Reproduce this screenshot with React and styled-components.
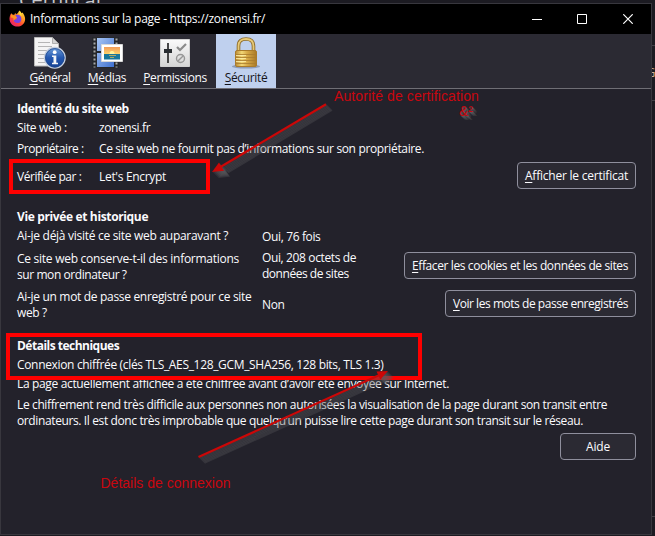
import React from 'react';
import styled, { createGlobalStyle } from 'styled-components';

const GlobalStyle = createGlobalStyle`
  * { box-sizing: border-box; }
  html, body { margin: 0; height: 536px; overflow: hidden; background: #1c1b22; }
`;

const Desktop = styled.div`
  position: relative;
  display: flex;
  flex-direction: column;
  width: 655px;
  height: 536px;
  overflow: hidden;
  background: #1c1b22;
  color: #fbfbfe;
  font: 12px/16px 'Open Sans', 'Noto Sans', sans-serif;
`;

const PageBehind = styled.div`
  height: 3px;
  flex: none;
  display: flex;
  align-items: flex-end;
  padding-left: 19px;
  overflow: hidden;
  font-size: 20px;
  line-height: 6px;
  color: #c8c8cc;
`;

const Dialog = styled.section`
  width: 652px;
  height: 532px;
  flex: none;
  display: flex;
  flex-direction: column;
  border: 1px solid #38373e;
  background: #23222b;
`;

const TitleBar = styled.header`
  height: 30px;
  flex: none;
  display: flex;
  align-items: center;
  padding: 0 0 1px 8px;
  background: #000;
`;

const Text = styled.span`
  display: block;
  white-space: pre;
  letter-spacing: ${(p) => p.$track ?? -0.36}px;
  font-weight: ${(p) => (p.$bold ? 700 : 400)};
`;

const WindowTitle = styled(Text)`
  margin-left: 4px;
  flex: 1;
`;

const WindowButtons = styled.div`
  display: flex;
  gap: 35px;
  margin-right: 18px;
  svg { display: block; }
  svg:last-child { margin-left: 1px; }
`;

const Toolbar = styled.nav`
  height: 55px;
  flex: none;
  display: flex;
  padding-left: 19px;
  background: #2b2a33;
  border-bottom: 1px solid #6f6e75;
`;

const Tab = styled.div`
  width: ${(p) => p.$width}px;
  display: flex;
  flex-direction: column;
  align-items: center;
  gap: 1px;
  padding-top: 3px;
  color: ${(p) => (p.$active ? '#15141a' : '#fbfbfe')};
  background: ${(p) => (p.$active ? '#bfd0ee' : 'transparent')};
  svg { display: block; flex: none; }
`;

const Key = styled.span`
  text-decoration: underline;
  text-underline-offset: 2px;
  text-decoration-thickness: 1px;
`;

const Content = styled.main`
  flex: 1;
  padding: 12px 15px 0 16px;
`;

const Group = styled.section`
  height: ${(p) => p.$height}px;
`;

const Heading = styled(Text).attrs({ as: 'h2', $bold: true })`
  margin: 0;
  font-size: 12px;
  height: 19px;
`;

const Row = styled.div`
  display: grid;
  grid-template-columns: ${(p) => p.$columns};
  height: ${(p) => p.$height}px;
`;

const Cell = styled.div`
  padding-top: ${(p) => p.$top ?? 0}px;
`;

const Button = styled.button`
  width: ${(p) => p.$width}px;
  height: 27px;
  margin: ${(p) => p.$top ?? -1}px 0 0 auto;
  padding: 0;
  display: flex;
  justify-content: center;
  align-items: center;
  border: 1px solid #8f8f9d;
  border-radius: 4px;
  background: #2b2a33;
  color: #fbfbfe;
  font: inherit;
`;

const Paragraph = styled.div`
  height: ${(p) => p.$height}px;
`;

const Frame = styled.div`
  position: absolute;
  left: ${(p) => p.$x}px;
  top: ${(p) => p.$y}px;
  width: ${(p) => p.$w}px;
  height: ${(p) => p.$h}px;
  border: 4px solid #fe0000;
`;

const Arrows = styled.svg`
  position: absolute;
  inset: 0;
  pointer-events: none;
`;

const Note = styled.span`
  position: absolute;
  left: ${(p) => p.$x}px;
  top: ${(p) => p.$y}px;
  white-space: pre;
  color: #c9070f;
  font: 14px/16px 'Liberation Sans', Arial, sans-serif;
  letter-spacing: ${(p) => p.$track ?? 0}px;
  text-shadow: ${(p) =>
    p.$shadow ? '1px 1px #55555a, 2px 2px #4b4b50, 3px 3px #404045, 4px 4px #35353b' : 'none'};
`;

const BehindText = styled.div`
  position: absolute;
  left: 652px;
  top: 64px;
  width: 3px;
  height: 16px;
  overflow: hidden;
  font-size: 13px;
  color: #c9ae94;
  text-indent: -6px;
`;

const BehindRule = styled.div`
  position: absolute;
  left: 652px;
  top: ${(p) => p.$y}px;
  width: 3px;
  height: 1px;
  background: #424148;
`;

function FirefoxLogo() {
  return (
    <svg width="17" height="17" viewBox="0 0 17 17">
      <defs>
        <linearGradient id="fox" x1="1" y1="0" x2="0.25" y2="1">
          <stop offset="0" stopColor="#fff04a" />
          <stop offset="0.4" stopColor="#ff9a22" />
          <stop offset="0.7" stopColor="#ff4236" />
          <stop offset="1" stopColor="#e62273" />
        </linearGradient>
      </defs>
      <path d="M2.2 3.2 3.8 4.8 5.4 4.7 6.2 2.7 7 4.6C8.5 3.5 9.4 2.5 10.3.5c1 .7 1.8 1.7 2.3 2.8l1-.8c.5 1 1.1 1.7 1.6 2.7 2.7 5.4-.8 11.4-6.6 11.4C3.6 16.6.4 13 .5 8.600c.1-2 .7-3.600 1.700-5.400Z" fill="url(#fox)" />
      <path d="M7 4.900c3-.8 5.400.9 5.400 4 0 2.500-1.600 4.200-3.900 4.200-2.500 0-4-1.600-3.900-3.800 1.200.5 2.400.4 3.500-.6L5.500 7.800Z" fill="#7542e5" />
      <path d="m2.100 4 2 1.600 2.700.4 1.400 1.700-1.900 1.100-1.700 1.900-.3-2.600-2.500-.6Z" fill="#ff941e" />
      <path d="M10.300.7c2.100 1.500 2.500 3.500 2.300 5.500L10.500 4Z" fill="#ffdf3c" />
    </svg>
  );
}

function GeneralIcon() {
  return (
    <svg width="32" height="32" viewBox="0 0 32 32">
      <defs>
        <linearGradient id="info" x1="0" y1="0" x2="0" y2="1">
          <stop offset="0" stopColor="#6f9fda" />
          <stop offset="0.5" stopColor="#2458b0" />
          <stop offset="1" stopColor="#143f91" />
        </linearGradient>
      </defs>
      <path d="M.5.500h18l6 6v22.500H.5Z" fill="#f4f4f4" stroke="#b9b9b9" />
      <path d="M18.500.500v6h6Z" fill="#d4d4d4" stroke="#999" strokeWidth=".7" />
      <path d="M4 5.500h12M4 9.500h14M4 13.500h9M4 17.500h7M4 21.500h7M4 25.500h9" stroke="#b5b5b5" />
      <circle cx="20.800" cy="20.800" r="10.300" fill="url(#info)" stroke="#c5cfde" strokeWidth="1.400" />
      <circle cx="20.800" cy="20.800" r="9.300" fill="none" stroke="#1c4790" strokeWidth=".8" />
      <circle cx="20.700" cy="15.200" r="1.900" fill="#fff" />
      <path d="M18 18.500h4.300v7.300h1.700v1.500h-6v-1.500h1.500V20H18Z" fill="#f3f5f8" />
    </svg>
  );
}

function MediaIcon() {
  return (
    <svg width="32" height="32" viewBox="0 0 32 32">
      <defs>
        <linearGradient id="film" x1="0" y1="0" x2="1" y2="1">
          <stop offset="0" stopColor="#a6c5f5" />
          <stop offset="1" stopColor="#3f70cf" />
        </linearGradient>
        <linearGradient id="sunset" x1="0" y1="0" x2="0" y2="1">
          <stop offset="0" stopColor="#f29b58" />
          <stop offset="1" stopColor="#ffdc70" />
        </linearGradient>
      </defs>
      <path d="M1 0h27v31H1Z" fill="#25272b" />
      <path d="M6 1h17v13H6ZM6 16h17v14H6Z" fill="url(#film)" />
      <path d="M3.500 1.500v29M25.500 1.500v29" stroke="#a8a8a8" strokeWidth="2" strokeDasharray="2 2" />
      <path d="M10.500 7.500h21v17h-21Z" fill="#fff" stroke="#d8d8d8" />
      <path d="M13 10h16v8H13Z" fill="url(#sunset)" />
      <circle cx="21" cy="16.500" r="2.500" fill="#fff29a" />
      <path d="M13 17h16v5.500H13Z" fill="#18779b" />
      <path d="M18 18.500h7M19 20.500h4" stroke="#d1b75c" strokeWidth=".8" />
    </svg>
  );
}

function PermissionsIcon() {
  return (
    <svg width="32" height="32" viewBox="0 0 32 32">
      <defs>
        <linearGradient id="panel" x1="0" y1="0" x2="0" y2="1">
          <stop offset="0" stopColor="#fafafa" />
          <stop offset="1" stopColor="#d5d5d5" />
        </linearGradient>
      </defs>
      <path d="M1.500 2.500h29v27h-29Z" fill="url(#panel)" stroke="#d0d0d0" />
      <path d="M9 6v20" stroke="#484848" strokeWidth="2" />
      <path d="M5 12h8v4H5Z" fill="#292d31" />
      <path d="m18 10 3 3 6-6" fill="none" stroke="#8b8b8b" strokeWidth="2.200" />
      <circle cx="21.500" cy="21.500" r="4" fill="none" stroke="#969696" strokeWidth="1.400" />
      <path d="m18.700 24.300 5.600-5.600" stroke="#969696" strokeWidth="1.400" />
    </svg>
  );
}

function LockIcon() {
  return (
    <svg width="32" height="32" viewBox="0 0 32 32">
      <defs>
        <linearGradient id="brass">
          <stop offset="0" stopColor="#b98a35" />
          <stop offset="0.300" stopColor="#f2d675" />
          <stop offset="0.550" stopColor="#d8aa48" />
          <stop offset="1" stopColor="#a97926" />
        </linearGradient>
      </defs>
      <ellipse cx="16" cy="29.500" rx="14" ry="2" fill="#6e7890" opacity=".6" />
      <path d="M8.500 15V9C8.500 4 11.500 2 16 2s7.500 2 7.500 7v6" fill="none" stroke="#8d6a28" strokeWidth="3.600" />
      <path d="M8.500 15V9C8.500 4 11.500 2 16 2s7.500 2 7.500 7v6" fill="none" stroke="#e7ca78" strokeWidth="1.800" />
      <rect x="5.500" y="13.500" width="21" height="16" rx="1.500" fill="url(#brass)" stroke="#a97b2b" />
      <path d="M6 17.500h20M6 20.500h20M6 23.500h20M6 26.500h20" stroke="#a87b2d" strokeWidth=".8" />
      <path d="M6 18.500h10M6 21.500h10M6 24.500h10" stroke="#fff0a8" strokeWidth=".8" />
    </svg>
  );
}

const shadowSteps = [6, 5, 4, 3, 2, 1];

function AnnotationArrows() {
  return (
    <Arrows width="655" height="536" viewBox="0 0 655 536">
      {shadowSteps.map((d) => (
        <g key={d} transform={`translate(${d} ${d})`} stroke="#5a5a5e" fill="#5a5a5e" opacity=".33">
          <path d="M326 104 222 166.500" strokeWidth="1.700" />
          <path d="m212 172 7-9.500 5 8.200Z" stroke="none" />
          <path d="m198.500 457 180-81.500" strokeWidth="1.700" />
          <path d="m388 371-11.500.5 3.800 8Z" stroke="none" />
        </g>
      ))}
      <path d="M326 104.300 220 167.300" stroke="#cb0707" strokeWidth="2.200" />
      <path d="m212 172 7-9.500 5 8.200Z" fill="#cb0707" />
      <path d="m198.500 457 181-82" stroke="#cb0707" strokeWidth="2.200" />
      <path d="m388 371-11.500.5 3.800 8Z" fill="#cb0707" />
    </Arrows>
  );
}

export default function App() {
  return (
    <Desktop>
      <GlobalStyle />
      <PageBehind>Certificat</PageBehind>
      <Dialog>
        <TitleBar>
          <FirefoxLogo />
          <WindowTitle $track={-0.26}>Informations sur la page - https://zonensi.fr/</WindowTitle>
          <WindowButtons>
            <svg width="10" height="10"><path d="M0 5.500h10" stroke="#fff" /></svg>
            <svg width="10" height="10"><path d="M.5.500h9v9h-9Z" fill="none" stroke="#fff" /></svg>
            <svg width="10" height="10"><path d="m.3.300 9.400 9.400M9.700.300.3 9.700" stroke="#fff" strokeWidth="1.200" /></svg>
          </WindowButtons>
        </TitleBar>
        <Toolbar>
          <Tab $width={60}><GeneralIcon /><Text $track={-0.45}><Key>G</Key>énéral</Text></Tab>
          <Tab $width={54}><MediaIcon /><Text $track={-0.3}><Key>M</Key>édias</Text></Tab>
          <Tab $width={82}><PermissionsIcon /><Text $track={-0.38}><Key>P</Key>ermissions</Text></Tab>
          <Tab $width={60} $active><LockIcon /><Text $track={-0.35}><Key>S</Key>écurité</Text></Tab>
        </Toolbar>
        <Content>
          <Group $height={108}>
            <Heading $track={-0.38}>Identité du site web</Heading>
            <Row $height={21} $columns="82px 1fr">
              <Text>Site web :</Text><Text $track={-0.4}>zonensi.fr</Text>
            </Row>
            <Row $height={22} $columns="82px 1fr">
              <Text $track={-0.47}>Propriétaire :</Text>
              <Text $track={-0.354}>Ce site web ne fournit pas d’informations sur son propriétaire.</Text>
            </Row>
            <Row $height={28} $columns="82px 1fr 119px">
              <Cell $top={6}><Text $track={-0.45}>Vérifiée par :</Text></Cell>
              <Cell $top={6}><Text $track={-0.31}>Let's Encrypt</Text></Cell>
              <Button $width={119}><Text $track={-0.22}><Key>A</Key>fficher le certificat</Text></Button>
            </Row>
          </Group>
          <Group $height={129}>
            <Heading>Vie privée et historique</Heading>
            <Row $height={22} $columns="245px 1fr">
              <Text $track={-0.29}>Ai-je déjà visité ce site web auparavant ?</Text>
              <Cell $top={1}><Text>Oui, 76 fois</Text></Cell>
            </Row>
            <Row $height={39} $columns="245px 1fr 232px">
              <Cell $top={1}>
                <Text $track={-0.267}>Ce site web conserve-t-il des informations</Text>
                <Text $track={-0.42}>sur mon ordinateur ?</Text>
              </Cell>
              <Cell>
                <Text $track={-0.37}>Oui, 208 octets de</Text>
                <Text $track={-0.47}>données de sites</Text>
              </Cell>
              <Button $width={232} $top={2}><Text $track={-0.386}><Key>E</Key>ffacer les cookies et les données de sites</Text></Button>
            </Row>
            <Row $height={32} $columns="245px 1fr 191px">
              <Cell>
                <Text $track={-0.318}>Ai-je un mot de passe enregistré pour ce site</Text>
                <Text>web ?</Text>
              </Cell>
              <Cell $top={8}><Text>Non</Text></Cell>
              <Button $width={191} $top={1}><Text $track={-0.459}><Key>V</Key>oir les mots de passe enregistrés</Text></Button>
            </Row>
          </Group>
          <Group $height={124}>
            <Heading $track={-0.51}>Détails techniques</Heading>
            <Paragraph $height={19}>
              <Text $track={-0.334}>Connexion chiffrée (clés TLS_AES_128_GCM_SHA256, 128 bits, TLS 1.3)</Text>
            </Paragraph>
            <Paragraph $height={21}>
              <Text $track={-0.344}>La page actuellement affichée a été chiffrée avant d’avoir été envoyée sur Internet.</Text>
            </Paragraph>
            <Paragraph $height={37}>
              <Text $track={-0.373}>Le chiffrement rend très difficile aux personnes non autorisées la visualisation de la page durant son transit entre</Text>
              <Text $track={-0.381}>ordinateurs. Il est donc très improbable que quelqu’un puisse lire cette page durant son transit sur le réseau.</Text>
            </Paragraph>
            <Button $width={76}><Text $track={-0.2}>Aide</Text></Button>
          </Group>
        </Content>
      </Dialog>
      <BehindText>G</BehindText>
      <BehindRule $y={45} />
      <BehindRule $y={100} />
      <BehindRule $y={516} />
      <Frame $x={9} $y={159} $w={201} $h={35} />
      <Frame $x={6} $y={333} $w={416} $h={47} />
      <AnnotationArrows />
      <Note $x={334} $y={88} $track={0.1}>Autorité de certification</Note>
      <Note $x={459} $y={103} $shadow>&²</Note>
      <Note $x={100.5} $y={475}>Détails de connexion</Note>
    </Desktop>
  );
}
